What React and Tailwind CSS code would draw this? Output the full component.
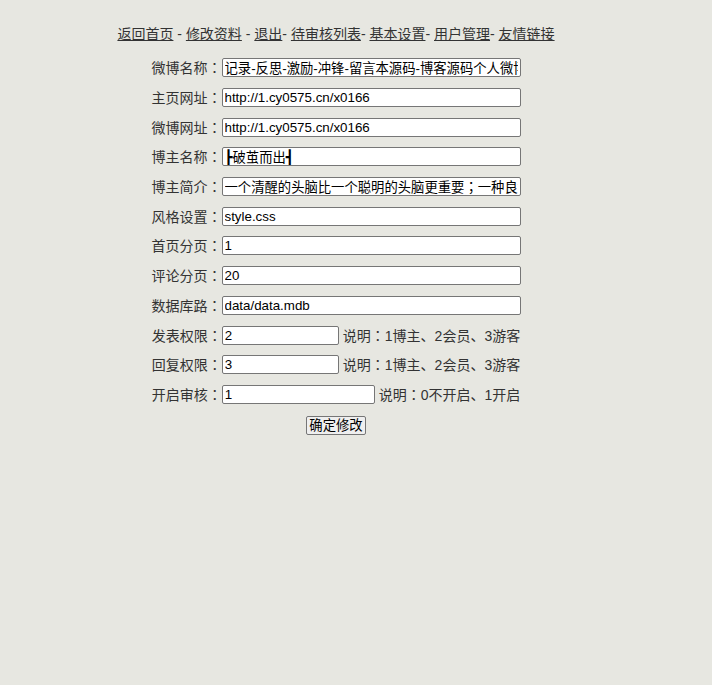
import React from "react";

const C = () => <span className="font-['Noto_Sans_CJK_TC',sans-serif]">：</span>;

function Row({ label, value, width = "w-[299px]", note, font = "" }) {
  return (
    <div className="h-[29.7px] flex items-center justify-center">
      <span className="w-[70px] text-right leading-[16px]">
        {label}
        <C />
      </span>
      <input
        defaultValue={value}
        className={`${width} ${font} h-[19px] px-[2px] py-[1px] bg-white text-black text-[13.33px] leading-[15px] border border-[#767676] rounded-[2px] outline-none`}
      />
      {note && (
        <span className="ml-[4px] leading-[16px]">
          说明
          <C />
          {note}
        </span>
      )}
    </div>
  );
}

export default function App() {
  const links = [
    ["返回首页", " - "],
    ["修改资料", " - "],
    ["退出", "- "],
    ["待审核列表", "- "],
    ["基本设置", "- "],
    ["用户管理", "- "],
    ["友情链接", ""],
  ];

  return (
    <div className="min-h-[685px] bg-[#e7e7e1] text-[#333] text-[14px] font-['Liberation_Sans','Noto_Sans_CJK_SC',sans-serif]">
      <div className="w-[672px] pt-[24px] text-center">
        <div className="h-[20px] leading-[20px] whitespace-pre">
          {links.map(([text, sep]) => (
            <React.Fragment key={text}>
              <a href="#" className="underline text-[#333]">
                {text}
              </a>
              {sep}
            </React.Fragment>
          ))}
        </div>

        <div className="mt-[9px]">
          <Row label="微博名称" value="记录-反思-激励-冲锋-留言本源码-博客源码个人微博" />
          <Row label="主页网址" value="http://1.cy0575.cn/x0166" />
          <Row label="微博网址" value="http://1.cy0575.cn/x0166" />
          <Row
            label="博主名称"
            value="┣破茧而出┫"
            font="font-['DejaVu_Sans','Noto_Sans_CJK_SC',sans-serif]"
          />
          <Row
            label="博主简介"
            value="一个清醒的头脑比一个聪明的头脑更重要；一种良好的心态比一种良好的能力更重要"
            font="font-['Liberation_Sans','Noto_Sans_CJK_TC',sans-serif]"
          />
          <Row label="风格设置" value="style.css" />
          <Row label="首页分页" value="1" />
          <Row label="评论分页" value="20" />
          <Row label="数据库路" value="data/data.mdb" />
          <Row label="发表权限" value="2" width="w-[117px]" note="1博主、2会员、3游客" />
          <Row label="回复权限" value="3" width="w-[117px]" note="1博主、2会员、3游客" />
          <Row label="开启审核" value="1" width="w-[153px]" note="0不开启、1开启" />
        </div>

        <div className="mt-[6.5px] flex justify-center">
          <button className="h-[19px] px-[2px] bg-[#efefef] text-black text-[13.33px] leading-[15px] border border-[#767676] rounded-[2px]">
            确定修改
          </button>
        </div>
      </div>
    </div>
  );
}
